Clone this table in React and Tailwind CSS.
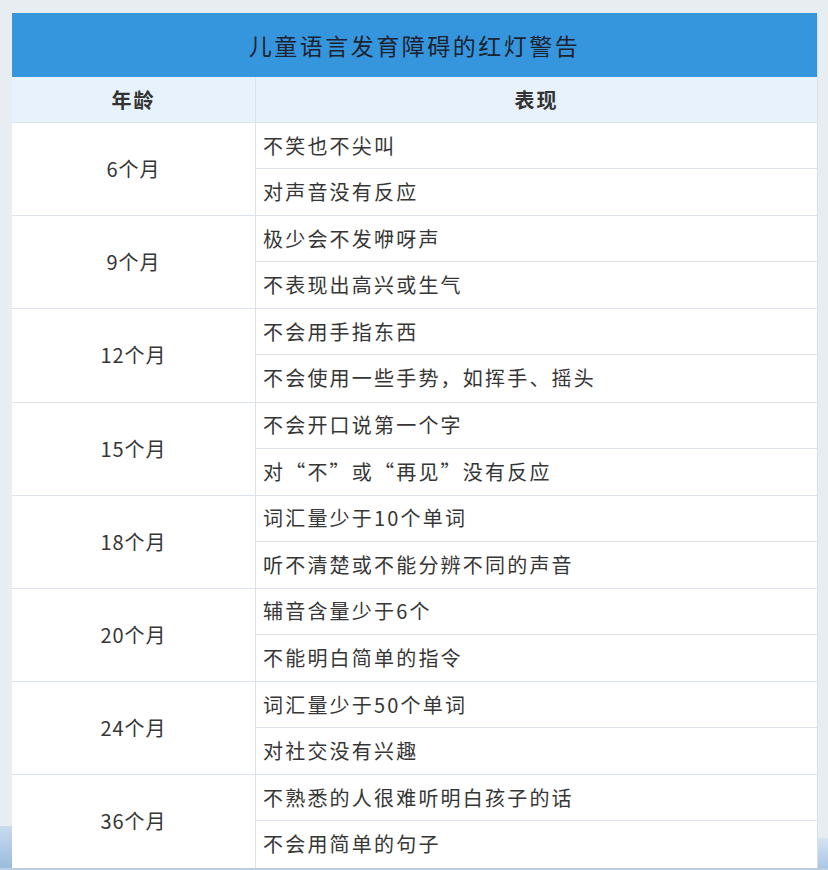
import React from 'react';

const rows = [
  { age: '6个月', items: ['不笑也不尖叫', '对声音没有反应'] },
  { age: '9个月', items: ['极少会不发咿呀声', '不表现出高兴或生气'] },
  { age: '12个月', items: ['不会用手指东西', '不会使用一些手势，如挥手、摇头'] },
  { age: '15个月', items: ['不会开口说第一个字', '对“不”或“再见”没有反应'] },
  { age: '18个月', items: ['词汇量少于10个单词', '听不清楚或不能分辨不同的声音'] },
  { age: '20个月', items: ['辅音含量少于6个', '不能明白简单的指令'] },
  { age: '24个月', items: ['词汇量少于50个单词', '对社交没有兴趣'] },
  { age: '36个月', items: ['不熟悉的人很难听明白孩子的话', '不会用简单的句子'] },
];

const font = { fontFamily: '"Noto Sans CJK SC", "Noto Sans", sans-serif' };

export default function App() {
  return (
    <div className="relative w-[828px] h-[870px] overflow-hidden bg-[#e8edf2] pt-[13px] pl-[12px] pr-[10px]" style={font}>
      {/* screen edge tint at the bottom corners */}
      <div className="absolute left-0 top-[826px] w-[12px] h-[44px] bg-gradient-to-b from-[#c9dbee] to-[#98badf]" />
      <div className="absolute right-0 top-[838px] w-[10px] h-[32px] bg-gradient-to-b from-[#d6e3f1] to-[#a8c4e4]" />
      <div className="w-[806px] bg-white border-r border-[#d9dfe6]">
        <div className="h-[64px] bg-[#3596dd] flex items-center justify-center text-[23px] tracking-[2.5px] text-[#1d2230]">
          儿童语言发育障碍的红灯警告
        </div>
        <div className="h-[46px] flex bg-[#e7f2fc] border-b border-[#dde3ea] text-[20px] font-bold tracking-[2px] text-[#333]">
          <div className="w-[244px] flex items-center justify-center border-r border-[#dde3ea]">年龄</div>
          <div className="flex-1 flex items-center justify-center">表现</div>
        </div>
        {rows.map((r) => (
          <div key={r.age} className="flex h-[93.2px] border-b border-[#dde3ea] text-[20px] text-[#363636]">
            <div className="w-[244px] flex items-center justify-center border-r border-[#dde3ea] tracking-[1px]">{r.age}</div>
            <div className="flex-1 flex flex-col">
              <div className="h-[46px] flex items-center pl-[7px] tracking-[2.2px] border-b border-[#dde3ea]">{r.items[0]}</div>
              <div className="flex-1 flex items-center pl-[7px] tracking-[2.2px]">{r.items[1]}</div>
            </div>
          </div>
        ))}
      </div>
      <div className="absolute left-0 bottom-0 w-full h-[2px] bg-[#bccde0]" />
    </div>
  );
}
